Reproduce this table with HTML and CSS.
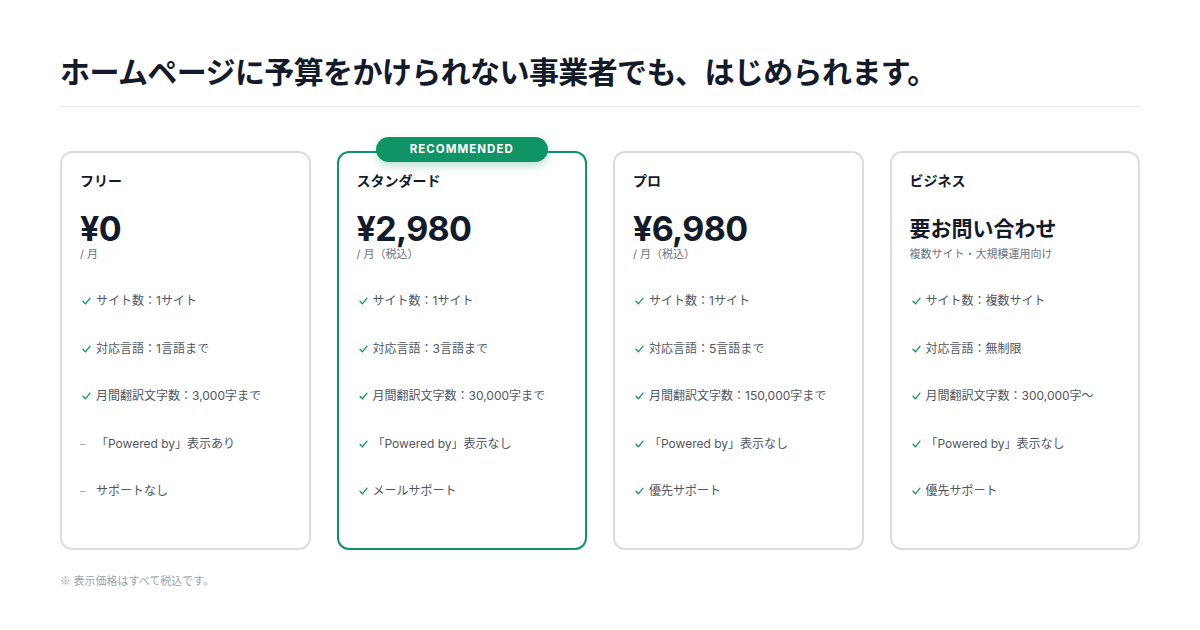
FILE: index.html
```html
<!DOCTYPE html>
<html lang="ja">
<head>
<meta charset="utf-8">
<title>料金プラン</title>
<link rel="stylesheet" href="styles.css">
</head>
<body>
<main class="page">
  <h1 class="title">ホームページに予算をかけられない事業者でも、はじめられます。</h1>
  <hr class="divider">
  <section class="plans">
    <article class="card">
      <h2 class="name">フリー</h2>
      <div class="price">¥0</div>
      <div class="unit">/ 月</div>
      <ul class="features">
        <li><span class="mark ok"><svg viewBox="0 0 9 8" width="9" height="8"><path d="M1 4.3 L3.4 6.8 L8 1.2"/></svg></span>サイト数：1サイト</li>
        <li><span class="mark ok"><svg viewBox="0 0 9 8" width="9" height="8"><path d="M1 4.3 L3.4 6.8 L8 1.2"/></svg></span>対応言語：1言語まで</li>
        <li><span class="mark ok"><svg viewBox="0 0 9 8" width="9" height="8"><path d="M1 4.3 L3.4 6.8 L8 1.2"/></svg></span>月間翻訳文字数：3,000字まで</li>
        <li><span class="mark no">–</span>「Powered by」表示あり</li>
        <li><span class="mark no">–</span>サポートなし</li>
      </ul>
    </article>
    <article class="card featured">
      <div class="badge">RECOMMENDED</div>
      <h2 class="name">スタンダード</h2>
      <div class="price">¥2,980</div>
      <div class="unit">/ 月（税込）</div>
      <ul class="features">
        <li><span class="mark ok"><svg viewBox="0 0 9 8" width="9" height="8"><path d="M1 4.3 L3.4 6.8 L8 1.2"/></svg></span>サイト数：1サイト</li>
        <li><span class="mark ok"><svg viewBox="0 0 9 8" width="9" height="8"><path d="M1 4.3 L3.4 6.8 L8 1.2"/></svg></span>対応言語：3言語まで</li>
        <li><span class="mark ok"><svg viewBox="0 0 9 8" width="9" height="8"><path d="M1 4.3 L3.4 6.8 L8 1.2"/></svg></span>月間翻訳文字数：30,000字まで</li>
        <li><span class="mark ok"><svg viewBox="0 0 9 8" width="9" height="8"><path d="M1 4.3 L3.4 6.8 L8 1.2"/></svg></span>「Powered by」表示なし</li>
        <li><span class="mark ok"><svg viewBox="0 0 9 8" width="9" height="8"><path d="M1 4.3 L3.4 6.8 L8 1.2"/></svg></span>メールサポート</li>
      </ul>
    </article>
    <article class="card">
      <h2 class="name">プロ</h2>
      <div class="price">¥6,980</div>
      <div class="unit">/ 月（税込）</div>
      <ul class="features">
        <li><span class="mark ok"><svg viewBox="0 0 9 8" width="9" height="8"><path d="M1 4.3 L3.4 6.8 L8 1.2"/></svg></span>サイト数：1サイト</li>
        <li><span class="mark ok"><svg viewBox="0 0 9 8" width="9" height="8"><path d="M1 4.3 L3.4 6.8 L8 1.2"/></svg></span>対応言語：5言語まで</li>
        <li><span class="mark ok"><svg viewBox="0 0 9 8" width="9" height="8"><path d="M1 4.3 L3.4 6.8 L8 1.2"/></svg></span>月間翻訳文字数：150,000字まで</li>
        <li><span class="mark ok"><svg viewBox="0 0 9 8" width="9" height="8"><path d="M1 4.3 L3.4 6.8 L8 1.2"/></svg></span>「Powered by」表示なし</li>
        <li><span class="mark ok"><svg viewBox="0 0 9 8" width="9" height="8"><path d="M1 4.3 L3.4 6.8 L8 1.2"/></svg></span>優先サポート</li>
      </ul>
    </article>
    <article class="card">
      <h2 class="name">ビジネス</h2>
      <div class="price contact">要お問い合わせ</div>
      <div class="unit">複数サイト・大規模運用向け</div>
      <ul class="features">
        <li><span class="mark ok"><svg viewBox="0 0 9 8" width="9" height="8"><path d="M1 4.3 L3.4 6.8 L8 1.2"/></svg></span>サイト数：複数サイト</li>
        <li><span class="mark ok"><svg viewBox="0 0 9 8" width="9" height="8"><path d="M1 4.3 L3.4 6.8 L8 1.2"/></svg></span>対応言語：無制限</li>
        <li><span class="mark ok"><svg viewBox="0 0 9 8" width="9" height="8"><path d="M1 4.3 L3.4 6.8 L8 1.2"/></svg></span>月間翻訳文字数：300,000字〜</li>
        <li><span class="mark ok"><svg viewBox="0 0 9 8" width="9" height="8"><path d="M1 4.3 L3.4 6.8 L8 1.2"/></svg></span>「Powered by」表示なし</li>
        <li><span class="mark ok"><svg viewBox="0 0 9 8" width="9" height="8"><path d="M1 4.3 L3.4 6.8 L8 1.2"/></svg></span>優先サポート</li>
      </ul>
    </article>
  </section>
  <p class="note">※ 表示価格はすべて税込です。</p>
</main>
</body>
</html>
```

FILE: styles.css
```css
* { box-sizing: border-box; }
html, body { margin: 0; padding: 0; background: #ffffff; }
body {
  font-family: "Inter", "Noto Sans CJK JP", "Liberation Sans", sans-serif;
  color: #111827;
}
.page {
  width: 1200px;
  height: 630px;
  padding: 52px 60px 0 60px;
}
.title {
  margin: 0;
  font-size: 30px;
  line-height: 40px;
  font-weight: 700;
  letter-spacing: -0.02em;
  color: #131a2a;
}
.divider {
  margin: 14px 0 0 0;
  border: 0;
  height: 1px;
  background: #e3e5ea;
}
.plans {
  margin-top: 44px;
  display: grid;
  grid-template-columns: repeat(4, 1fr);
  gap: 26px;
}
.card {
  position: relative;
  border: 2px solid #d9dce1;
  border-radius: 12px;
  padding: 18px 18px 48px 18px;
  background: #fff;
}
.card.featured {
  border-color: #119465;
}
.badge {
  position: absolute;
  top: -16px;
  left: 50%;
  transform: translateX(-50%);
  width: 172px;
  height: 25px;
  border-radius: 13px;
  background: #119465;
  color: #fff;
  font-size: 11.5px;
  font-weight: 700;
  letter-spacing: 0.09em;
  line-height: 25px;
  text-align: center;
  box-shadow: 0 4px 10px rgba(17, 148, 101, 0.28);
}
.name {
  margin: 0;
  font-size: 14px;
  line-height: 20px;
  font-weight: 700;
  color: #131a2a;
}
.price {
  margin-top: 21px;
  font-size: 34px;
  line-height: 34px;
  font-weight: 700;
  letter-spacing: -0.02em;
  color: #131a2a;
}
.price.contact {
  font-size: 21px;
  letter-spacing: 0;
}
.unit {
  margin-top: 0;
  font-size: 11px;
  line-height: 16px;
  color: #6b7280;
}
.features {
  list-style: none;
  margin: 30px 0 0 0;
  padding: 0;
  display: flex;
  flex-direction: column;
  gap: 29.5px;
}
.features li {
  display: flex;
  align-items: center;
  font-size: 12px;
  line-height: 18px;
  color: #4f5663;
}
.mark {
  width: 16px;
  flex: none;
  display: flex;
  align-items: center;
  font-size: 11px;
  padding-left: 2px;
}
.mark svg {
  fill: none;
  stroke: #119465;
  stroke-width: 1.3;
  stroke-linecap: round;
  stroke-linejoin: round;
}
.mark.no { color: #9ca3af; padding-left: 0; }
.note {
  margin: 22px 0 0 0;
  font-family: "Noto Sans CJK JP", sans-serif;
  font-size: 11px;
  line-height: 16px;
  color: #9ca3af;
}
```
